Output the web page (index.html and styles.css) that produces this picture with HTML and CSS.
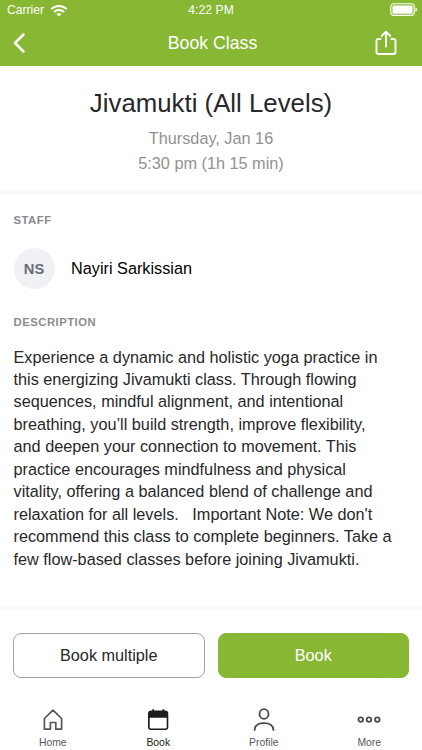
FILE: index.html
```html
<!DOCTYPE html>
<html lang="en">
<head>
<meta charset="utf-8">
<title>Book Class</title>
<link rel="stylesheet" href="styles.css">
</head>
<body>
<header class="top">
  <div class="status">
    <div class="carrier"><span>Carrier</span>
      <svg class="wifi" width="18" height="13" viewBox="0 0 18 13" fill="none" stroke="#fff" stroke-width="2"><path d="M1.2 5.1C5.5.8 12.500.8 16.800 5.100M4 8c2.800-2.700 7.200-2.700 10 0"/><path d="M6.500 10Q9 8 11.500 10L9 12.500z" fill="#fff" stroke="none"/></svg>
    </div>
    <span class="time">4:22 PM</span>
    <svg class="battery" width="28" height="14" viewBox="0 0 28 14"><rect x=".8" y=".8" width="23.400" height="11.600" rx="3" fill="none" stroke="#fff" stroke-width="1.100"/><rect x="2.500" y="2.500" width="20" height="8.200" rx="1.300" fill="#fff"/><path d="M25.500 4.300q1.600.6 1.600 2.300t-1.600 2.300z" fill="#fff"/></svg>
  </div>
  <div class="nav">
    <svg width="14" height="20" viewBox="0 0 14 20" fill="none" stroke="#fff" stroke-width="2.500" stroke-linecap="round" stroke-linejoin="round"><path d="M11.500 1.500L3 10l8.500 8.500"/></svg>
    <h1 class="nav-title">Book Class</h1>
    <svg width="22" height="26" viewBox="0 0 22 26" fill="none" stroke="#fff" stroke-width="1.900" stroke-linecap="round" stroke-linejoin="round"><path d="M5.500 9H3.500Q1.500 9 1.500 11v11q0 2 2 2h15q2 0 2-2V11q0-2-2-2H16.500M11 16.500V2M6.700 6L11 1.700 15.300 6"/></svg>
  </div>
</header>
<main class="content">
  <section class="summary">
    <h2 class="title">Jivamukti (All Levels)</h2>
    <p class="when">Thursday, Jan 16<br>5:30 pm (1h 15 min)</p>
  </section>
  <section class="details">
    <h3 class="label">STAFF</h3>
    <div class="staff"><span class="avatar">NS</span><span class="name">Nayiri Sarkissian</span></div>
    <h3 class="label">DESCRIPTION</h3>
    <p class="description">Experience a dynamic and holistic yoga practice in<br>this energizing Jivamukti class. Through flowing<br>sequences, mindful alignment, and intentional<br>breathing, you’ll build strength, improve flexibility,<br>and deepen your connection to movement. This<br>practice encourages mindfulness and physical<br>vitality, offering a balanced blend of challenge and<br>relaxation for all levels. &nbsp; Important Note: We don't<br>recommend this class to complete beginners. Take a<br>few flow-based classes before joining Jivamukti.</p>
  </section>
</main>
<footer class="bottom">
  <div class="actions"><button class="btn">Book multiple</button><button class="btn primary">Book</button></div>
  <nav class="tabs">
    <a class="tab"><svg width="24" height="24" viewBox="0 0 24 24" fill="none" stroke="#55555f" stroke-width="1.700" stroke-linejoin="round"><path d="M3.400 10.500L12 2.200l8.600 8.300v10.700h-5.800v-6.700H9.400v6.700h-6z"/></svg>Home</a>
    <a class="tab active"><svg width="24" height="24" viewBox="0 0 24 24"><path d="M5.500 2.500h.8V1.200h1.800v1.300h8.400V1.200h1.800v1.300h.8q3.200 0 3.200 3v13.600q0 3-3 3H5q-3 0-3-3V5.500q0-3 3.500-3z" fill="#1c1c20"/><path d="M3.700 9.800h17v9.400q0 1.300-1.300 1.300H5q-1.300 0-1.300-1.300z" fill="#fff"/></svg>Book</a>
    <a class="tab"><svg width="24" height="24" viewBox="0 0 24 24" fill="none" stroke="#4c4c56" stroke-width="1.800" stroke-linecap="round"><ellipse cx="12" cy="6" rx="4.500" ry="4.900"/><path d="M2.600 22C2.800 17.500 6.500 15.200 12 15.200s9.200 2.300 9.400 6.800"/></svg>Profile</a>
    <a class="tab"><svg width="24" height="24" viewBox="0 0 24 24" fill="none" stroke="#4c4c56" stroke-width="1.800"><circle cx="3.700" cy="11.600" r="2.300"/><circle cx="12" cy="11.600" r="2.300"/><circle cx="20.300" cy="11.600" r="2.300"/></svg>More</a>
  </nav>
</footer>
</body>
</html>
```
FILE: styles.css
```css
* { box-sizing: border-box; }
body {
  margin: 0;
  height: 750px;
  display: flex;
  flex-direction: column;
  overflow: hidden;
  background: #fff;
  color: #28282a;
  font-family: "Liberation Sans", Arial, sans-serif;
  font-size: 16.25px;
}
h1, h2, h3, p { margin: 0; font-weight: 400; }
svg { display: block; flex: none; }
.top { height: 66px; background: #88b734; color: #fff; }
.status {
  height: 20px;
  display: grid;
  grid-template-columns: 1fr auto 1fr;
  align-items: center;
  padding: 0 4px 0 7px;
  font-size: 12.1px;
}
.carrier { display: flex; align-items: center; gap: 6px; }
.time { margin-right: 3px; line-height: 14px; letter-spacing: .1px; }
.battery { justify-self: end; }
.nav {
  height: 46px;
  display: grid;
  grid-template-columns: 1fr auto 1fr;
  align-items: center;
  padding: 0 25px 0 12px;
}
.nav svg:last-child { justify-self: end; }
.nav-title { font-size: 17.7px; padding-left: 16px; }
.content { flex: 1; }
.summary {
  height: 129px;
  padding-top: 22px;
  text-align: center;
  border-bottom: 4px solid #f7f8fa;
}
.title { font-size: 25.8px; line-height: 30px; }
.when { margin-top: 8px; line-height: 24.5px; color: #919191; }
.details { padding: 18px 14px 0 13.5px; }
.label {
  font-size: 11.3px;
  line-height: 14px;
  font-weight: 700;
  letter-spacing: .5px;
  color: #8b8b8e;
}
.staff { display: flex; align-items: center; gap: 16.5px; margin: 21px 0 26px; color: #000; }
.avatar {
  width: 41px;
  height: 41px;
  border-radius: 50%;
  display: flex;
  align-items: center;
  justify-content: center;
  background: #eff1f4;
  color: #6c6c76;
  font-size: 14.7px;
  font-weight: 700;
}
.description { margin-top: 16.500px; line-height: 22.45px; white-space: nowrap; }
.bottom { height: 143px; border-top: 3px solid #f7f8fa; }
.actions { display: flex; gap: 13px; padding: 23px 13px 0; }
.btn {
  flex: 1;
  height: 45px;
  border: 1px solid #a3a3a3;
  border-radius: 8px;
  padding: 0;
  background: #fff;
  color: #28282a;
  font: inherit;
}
.btn.primary { background: #88b734; border-color: #88b734; color: #fff; }
.tabs { display: grid; grid-template-columns: repeat(4, 1fr); margin-top: 30px; }
.tab {
  display: flex;
  flex-direction: column;
  align-items: center;
  gap: 5px;
  font-size: 10.4px;
  line-height: 12px;
  color: #55555f;
}
.tab.active { color: #1c1c20; }
```
